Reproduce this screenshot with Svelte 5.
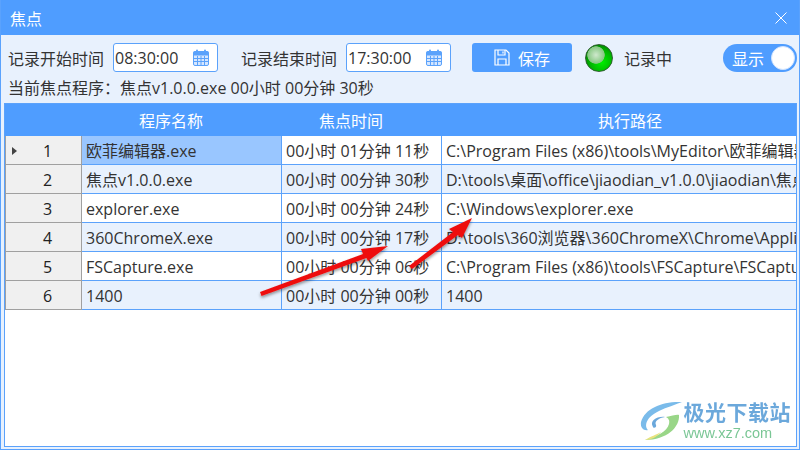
<script lang="ts">
  const rows = [
    { name: '欧菲编辑器.exe', time: '00小时 01分钟 11秒', path: 'C:\\Program Files (x86)\\tools\\MyEditor\\欧菲编辑器' },
    { name: '焦点v1.0.0.exe', time: '00小时 00分钟 30秒', path: 'D:\\tools\\桌面\\office\\jiaodian_v1.0.0\\jiaodian\\焦点' },
    { name: 'explorer.exe', time: '00小时 00分钟 24秒', path: 'C:\\Windows\\explorer.exe' },
    { name: '360ChromeX.exe', time: '00小时 00分钟 17秒', path: 'D:\\tools\\360浏览器\\360ChromeX\\Chrome\\Application' },
    { name: 'FSCapture.exe', time: '00小时 00分钟 06秒', path: 'C:\\Program Files (x86)\\tools\\FSCapture\\FSCapture' },
    { name: '1400', time: '00小时 00分钟 00秒', path: '1400' }
  ];
</script>

{#snippet calendar()}
  <svg class="cal" viewBox="0 0 16 17" width="16" height="17">
    <rect x="0.5" y="2.5" width="15" height="14" rx="1.5" fill="#d6e7ff" stroke="#5ba2fb" />
    <rect x="0.5" y="2.5" width="15" height="4" fill="#5ba2fb" />
    <rect x="3" y="0.5" width="2" height="4" rx="1" fill="#5ba2fb" />
    <rect x="11" y="0.5" width="2" height="4" rx="1" fill="#5ba2fb" />
    <path d="M1 9.5h14M1 12.5h14M4.5 7v9M8 7v9M11.5 7v9" stroke="#5ba2fb" fill="none" />
  </svg>
{/snippet}

<div class="window">
  <header class="titlebar">
    <span>焦点</span>
    <svg viewBox="0 0 12 12" width="12" height="12"><path d="M0.5 0.5l11 11M11.5 0.5l-11 11" stroke="#fff" fill="none" /></svg>
  </header>

  <div class="panel">
    <div class="toolbar">
      <span class="label">记录开始时间</span>
      <div class="timebox"><span>08:30:00</span>{@render calendar()}</div>
      <span class="label second">记录结束时间</span>
      <div class="timebox"><span>17:30:00</span>{@render calendar()}</div>
      <button type="button" class="save">
        <svg viewBox="0 0 16 17" width="16" height="17" fill="none" stroke="#fff" stroke-width="1.2">
          <path d="M1 1h11l3 3v12H1z" />
          <path d="M4 1v5h7V1M9 2.5v2M4 16v-6h8v6" />
        </svg>
        保存
      </button>
      <div class="led"></div>
      <span class="status">记录中</span>
      <div class="toggle"><span>显示</span><i></i></div>
    </div>
    <p class="current">当前焦点程序：焦点v1.0.0.exe 00小时 00分钟 30秒</p>
  </div>

  <div class="grid">
    <table>
      <colgroup>
        <col class="c0" /><col class="c1" /><col class="c2" /><col />
      </colgroup>
      <thead>
        <tr><th></th><th class="shift-l">程序名称</th><th class="shift-l">焦点时间</th><th class="shift-r">执行路径</th></tr>
      </thead>
      <tbody>
        {#each rows as row, i}
          <tr class:alt={i % 2 === 1}>
            <td class="num">
              {#if i === 0}<b class="pointer"></b>{/if}
              {i + 1}
            </td>
            <td class:sel={i === 0}>{row.name}</td>
            <td>{row.time}</td>
            <td>{row.path}</td>
          </tr>
        {/each}
      </tbody>
    </table>
  </div>

  <!-- annotation arrows drawn over the table -->
  <svg class="arrows" viewBox="0 0 800 450" width="800" height="450">
    <defs>
      <filter id="sh" x="-20%" y="-40%" width="140%" height="180%">
        <feDropShadow dx="0" dy="2" stdDeviation="1.5" flood-color="#000" flood-opacity="0.4" />
      </filter>
    </defs>
    <g filter="url(#sh)" fill="#ee1111">
      <path d="M260 292 L363 254 L361 249 L388 246 L368 261 L366.5 258 L261.5 296 Z" />
      <path d="M409 266 L453 232 L449 229 L472 218 L462 238 L458 235 L412 269 Z" />
    </g>
  </svg>

  <div class="watermark">
    <svg viewBox="0 0 44 44" width="44" height="44">
      <path d="M43 3 C24 2 6 9 2 23 C1 29 5 32 9 31 C5 27 7 18 20 12 C28 8 36 6 43 3Z" fill="#6cb4e8" />
      <path d="M14 28 C10 22 18 17 26 18 C20 19 15 22 17 26 C18 28 15 30 14 28Z" fill="#5c9fd8" />
      <path d="M40 16 C41 28 28 41 6 41 C18 37 28 33 30 25 C31 21 29 19 27 18 C33 17 38 15 40 16Z" fill="#8fd27c" />
      <path d="M6 41 C12 37 17 36 22 33 C18 38 12 41 6 41Z" fill="#e8e070" />
    </svg>
    <div>
      <div class="wm-cn">极光下载站</div>
      <div class="wm-url">www.xz7.com</div>
    </div>
  </div>
</div>

<style>
  :global(body) {
    margin: 0;
    background: #fff;
  }

  .window {
    position: relative;
    width: 800px;
    height: 450px;
    box-sizing: border-box;
    overflow: hidden;
    display: flex;
    flex-direction: column;
    background: #e8f1fd;
    border: 1px solid #5aa2fd;
    border-top: none;
    font-family: "Open Sans", "Noto Sans CJK SC", sans-serif;
    font-size: 16px;
    color: #333;
  }

  .titlebar {
    height: 35px;
    flex: none;
    margin: 0 -1px;
    padding: 0 13px 0 10px;
    display: flex;
    align-items: center;
    justify-content: space-between;
    background: #4f9dff;
    color: #fff;
  }

  .panel {
    height: 68px;
    flex: none;
    margin: 0 -1px;
    padding: 8px 3px 0 8px;
    box-sizing: border-box;
  }

  .toolbar {
    display: flex;
    align-items: center;
    height: 29px;
  }

  .second {
    margin-left: 23px;
  }

  .timebox {
    width: 105px;
    height: 29px;
    box-sizing: border-box;
    margin-left: 9px;
    padding: 0 8px 0 1px;
    display: flex;
    align-items: center;
    justify-content: space-between;
    background: #fff;
    border: 1px solid #5ba2fb;
    border-radius: 3px;
  }

  .save {
    width: 100px;
    height: 29px;
    margin: 0 13px 0 21px;
    padding: 0;
    display: flex;
    align-items: center;
    justify-content: center;
    gap: 8px;
    border: none;
    border-radius: 3px;
    background: #4f9dff;
    color: #fff;
    font: inherit;
  }

  .led {
    width: 28px;
    height: 28px;
    flex: none;
    border-radius: 50%;
    border: 1px solid #2f5f2f;
    box-sizing: border-box;
    background:
      radial-gradient(circle 9px at 10px 10px, #cfe8cd 0, #86c882 8.4px, transparent 9px),
      radial-gradient(circle at 60% 65%, #00f000 0, #00b400 50%, #005f00 100%);
  }

  .status {
    margin-left: 11px;
  }

  .toggle {
    width: 74px;
    height: 28px;
    margin-left: auto;
    padding: 0 2px 0 9px;
    box-sizing: border-box;
    display: flex;
    align-items: center;
    justify-content: space-between;
    border-radius: 14px;
    background: #4f9dff;
    color: #fff;
  }

  .toggle i {
    width: 24px;
    height: 24px;
    box-sizing: border-box;
    border-radius: 50%;
    background: #fff;
    border: 1px solid #cfe3ff;
  }

  .current {
    margin: 5px 0 0;
    line-height: 22px;
  }

  .grid {
    flex: 1;
    min-height: 0;
    margin: 0 2px 2px 3px;
    background: #fff;
    border: 1px solid #5ba2fb;
    overflow: hidden;
  }

  table {
    width: 100%;
    border-collapse: separate;
    border-spacing: 0;
    table-layout: fixed;
  }

  .c0 { width: 77px; }
  .c1 { width: 200px; }
  .c2 { width: 160px; }

  th {
    height: 32px;
    padding: 0;
    background: #4f9dff;
    color: #fff;
    font-weight: 400;
  }

  .shift-l {
    padding-right: 22px;
  }

  .shift-r {
    padding-left: 22px;
  }

  td {
    height: 26px;
    padding: 2px 0 0 4px;
    box-sizing: content-box;
    white-space: nowrap;
    overflow: hidden;
    background: #fff;
    border-right: 1px solid #5ba2fb;
    border-bottom: 1px solid #5ba2fb;
    line-height: 26px;
  }

  td:last-child {
    border-right: none;
  }

  .alt td {
    background: #e8f1fd;
  }

  td.sel {
    background: #99c6ff;
  }

  tbody td.num {
    position: relative;
    padding: 2px 0 0 8px;
    text-align: center;
    background: #f0f0f0;
    color: #222;
    border-left: 1px solid #a0a0a0;
    border-right: 1px solid #a0a0a0;
    border-bottom: 1px solid #a0a0a0;
  }

  .pointer {
    position: absolute;
    left: 6px;
    top: 11px;
    border-left: 5px solid #444;
    border-top: 4px solid transparent;
    border-bottom: 4px solid transparent;
  }

  .arrows {
    position: absolute;
    left: -1px;
    top: 0;
    pointer-events: none;
  }

  .watermark {
    position: absolute;
    right: 8px;
    bottom: 6px;
    display: flex;
    align-items: center;
    gap: 1px;
    opacity: 0.9;
  }

  .wm-cn {
    font-size: 21px;
    line-height: 24px;
    font-weight: 700;
    letter-spacing: 0.5px;
    color: #5c9fd8;
  }

  .wm-url {
    font-family: "Liberation Sans", sans-serif;
    font-size: 14.5px;
    line-height: 18px;
    color: #6cc08a;
  }
</style>
